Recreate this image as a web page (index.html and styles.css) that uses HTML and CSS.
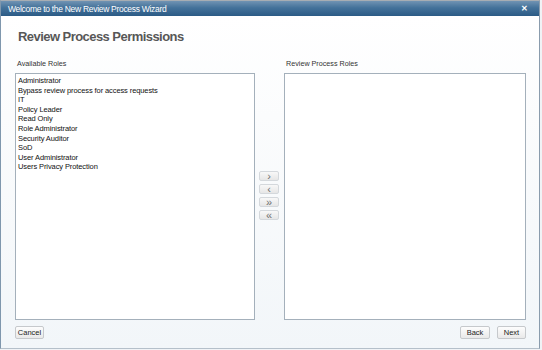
FILE: index.html
```html
<!DOCTYPE html>
<html>
<head>
    <title>Welcome to the New Review Process Wizard</title>
    <link rel="stylesheet" href="styles.css">
</head>
<body>

<div class="dialog">
    <div class="dialog-title">
        <span>Welcome to the New Review Process Wizard</span>
        <span class="close">&#x2715;</span>
    </div>

    <div class="dialog-body">
        <h1>Review Process Permissions</h1>

        <div class="picker">
            <div class="picker-col available">
                <div class="picker-label">Available Roles</div>
                <ul class="role-list">
                    <li>Administrator</li>
                    <li>Bypass review process for access requests</li>
                    <li>IT</li>
                    <li>Policy Leader</li>
                    <li>Read Only</li>
                    <li>Role Administrator</li>
                    <li>Security Auditor</li>
                    <li>SoD</li>
                    <li>User Administrator</li>
                    <li>Users Privacy Protection</li>
                </ul>
            </div>

            <div class="move-buttons">
                <button class="move">&rsaquo;</button>
                <button class="move">&lsaquo;</button>
                <button class="move">&raquo;</button>
                <button class="move">&laquo;</button>
            </div>

            <div class="picker-col selected">
                <div class="picker-label">Review Process Roles</div>
                <ul class="role-list"></ul>
            </div>
        </div>

        <div class="dialog-footer">
            <button class="btn">Cancel</button>
            <div class="nav">
                <button class="btn">Back</button>
                <button class="btn">Next</button>
            </div>
        </div>
    </div>
</div>

</body>
</html>
```

FILE: styles.css
```css
/* Page */
html, body {
    margin: 0;
    padding: 0;
    background: #f0f3f6;
}

body {
    font-family: "Liberation Sans", Arial, sans-serif;
    color: #222;
}

/* Dialog window */
.dialog {
    width: 540px;
    height: 349px;
    display: flex;
    flex-direction: column;
    border-left: 1px solid #7f97ad;
    border-right: 1px solid #8a9cad;
    border-bottom: 1px solid #b5c0ca;
    border-top: 1px solid #a7adb3;
    box-sizing: border-box;
}

.dialog-title {
    height: 15px;
    flex-shrink: 0;
    display: flex;
    align-items: center;
    justify-content: space-between;
    padding: 0 11px 0 7px;
    background: linear-gradient(#7093b3, #44729a 45%, #2b5b86);
    color: #fff;
    font-size: 8.5px;
    letter-spacing: -0.3px;
}

.close {
    font-size: 8px;
    font-weight: bold;
}

.dialog-body {
    flex: 1;
    display: flex;
    flex-direction: column;
    padding: 0 13px 9px 14px;
    background: linear-gradient(#ffffff, #fbfcfd 30%, #f2f6f9);
}

h1 {
    margin: 13px 0 0 3px;
    font-size: 13px;
    line-height: 16px;
    letter-spacing: -0.55px;
    color: #575757;
}

/* Role picker */
.picker {
    flex: 1;
    display: flex;
    margin-top: 14px;
}

.picker-col {
    display: flex;
    flex-direction: column;
}

.available {
    width: 240px;
}

.selected {
    flex: 1;
}

.picker-label {
    height: 9px;
    font-size: 7.2px;
    line-height: 9px;
    color: #333;
    margin: 0 0 5px 2px;
}

.role-list {
    flex: 1;
    list-style: none;
    margin: 0;
    padding: 2px 2px;
    background: #fff;
    border: 1px solid #a4b0bb;
    font-size: 7.5px;
    letter-spacing: -0.1px;
    line-height: 9.6px;
    color: #111;
}

.move-buttons {
    width: 20px;
    display: flex;
    flex-direction: column;
    justify-content: center;
    gap: 3px;
    margin: 14px 5px 0 4px;
    padding-bottom: 3px;
}

.move {
    height: 10px;
    padding: 0;
    border: 1px solid #d4d8dc;
    border-radius: 2px;
    background: linear-gradient(#f8f8f8, #e6e6e6);
    color: #707070;
    font-family: "Liberation Sans", Arial, sans-serif;
    font-size: 11px;
    line-height: 6px;
}

/* Footer buttons */
.dialog-footer {
    display: flex;
    justify-content: space-between;
    margin-top: 6px;
}

.nav {
    display: flex;
    gap: 7px;
}

.btn {
    width: 29px;
    height: 13px;
    padding: 0;
    border: 1px solid #c6c9cc;
    border-radius: 2px;
    background: linear-gradient(#fdfdfd, #e9e9e9);
    font-family: "Liberation Sans", Arial, sans-serif;
    font-size: 7.5px;
    color: #222;
    line-height: 11px;
}

.nav .btn:first-child {
    width: 30px;
}
```
